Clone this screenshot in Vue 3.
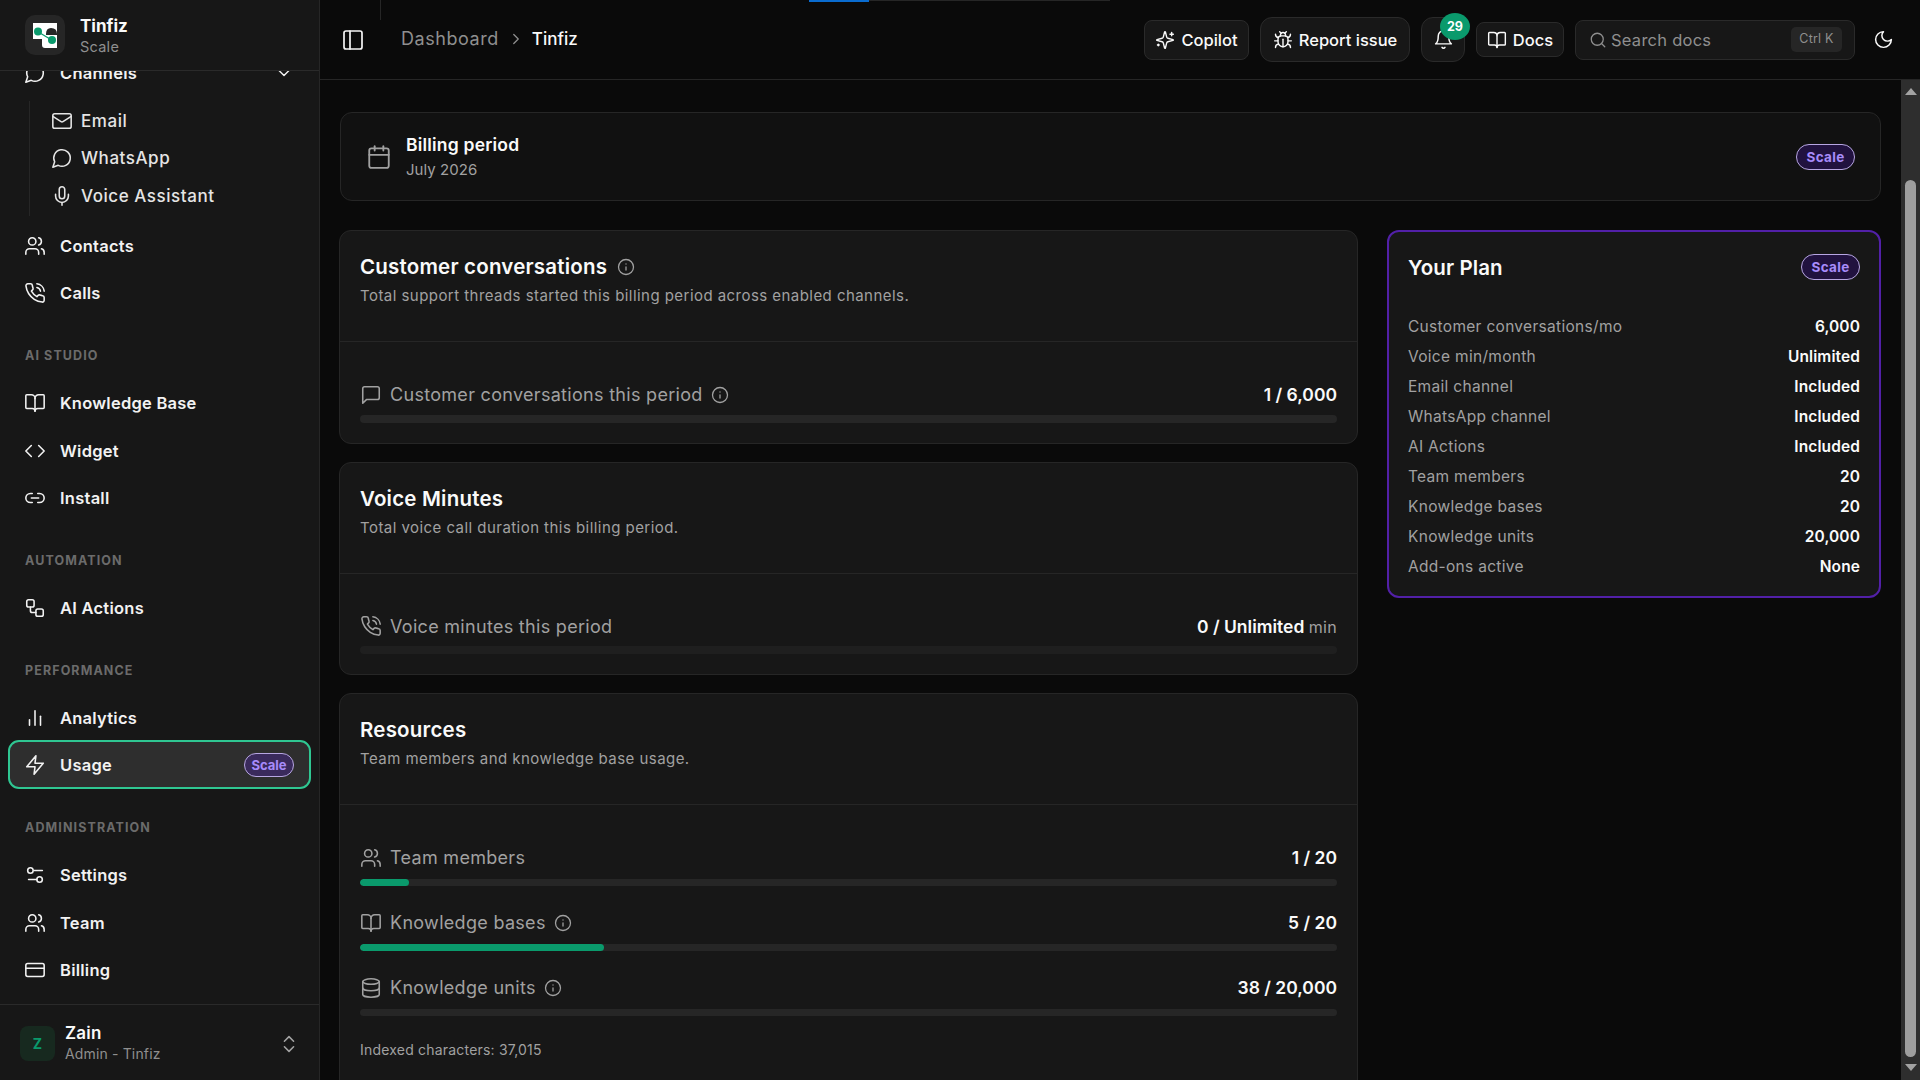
<script setup>
import { h } from 'vue'

const circle = (cx, cy, r) => `M${cx - r} ${cy}a${r} ${r} 0 1 0 ${2 * r} 0a${r} ${r} 0 1 0 ${-2 * r} 0`
const rect = (x, y, w, ht, r) =>
  `M${x + r} ${y}h${w - 2 * r}a${r} ${r} 0 0 1 ${r} ${r}v${ht - 2 * r}a${r} ${r} 0 0 1 ${-r} ${r}h${-(w - 2 * r)}a${r} ${r} 0 0 1 ${-r} ${-r}v${-(ht - 2 * r)}a${r} ${r} 0 0 1 ${r} ${-r}z`

const icons = {
  chat: ['M7.9 20A9 9 0 1 0 4 16.1L2 22Z'],
  mail: [rect(2, 4, 20, 16, 2), 'm22 7-8.97 5.7a1.94 1.94 0 0 1-2.06 0L2 7'],
  mic: ['M12 2a3 3 0 0 0-3 3v7a3 3 0 0 0 6 0V5a3 3 0 0 0-3-3Z', 'M19 10v2a7 7 0 0 1-14 0v-2', 'M12 19v3'],
  users: ['M16 21v-2a4 4 0 0 0-4-4H6a4 4 0 0 0-4 4v2', circle(9, 7, 4), 'M22 21v-2a4 4 0 0 0-3-3.87', 'M16 3.13a4 4 0 0 1 0 7.75'],
  calls: [
    'M22 16.92v3a2 2 0 0 1-2.18 2 19.79 19.79 0 0 1-8.63-3.07 19.5 19.5 0 0 1-6-6 19.79 19.79 0 0 1-3.07-8.67A2 2 0 0 1 4.11 2h3a2 2 0 0 1 2 1.72 12.84 12.84 0 0 0 .7 2.81 2 2 0 0 1-.45 2.11L8.09 9.91a16 16 0 0 0 6 6l1.27-1.27a2 2 0 0 1 2.11-.45 12.84 12.84 0 0 0 2.81.7A2 2 0 0 1 22 16.92z',
    'M14.05 2a9 9 0 0 1 8 7.94',
    'M14.05 6A5 5 0 0 1 18 10',
  ],
  book: ['M12 7v14', 'M3 18a1 1 0 0 1-1-1V4a1 1 0 0 1 1-1h5a4 4 0 0 1 4 4 4 4 0 0 1 4-4h5a1 1 0 0 1 1 1v13a1 1 0 0 1-1 1h-6a3 3 0 0 0-3 3 3 3 0 0 0-3-3z'],
  code: ['m16 18 6-6-6-6', 'm8 6-6 6 6 6'],
  link: ['M9 17H7A5 5 0 0 1 7 7h2', 'M15 7h2a5 5 0 1 1 0 10h-2', 'M8 12h8'],
  workflow: [rect(3, 3, 8, 8, 2), 'M7 11v4a2 2 0 0 0 2 2h4', rect(13, 13, 8, 8, 2)],
  chart: ['M18 20V10', 'M12 20V4', 'M6 20v-6'],
  zap: ['M13 2 3 14h9l-1 8 10-12h-9l1-8z'],
  sliders: ['M20 7h-9', 'M14 17H5', circle(17, 17, 3), circle(7, 7, 3)],
  card: [rect(2, 5, 20, 14, 2), 'M2 10h20'],
  updown: ['m7 15 5 5 5-5', 'm7 9 5-5 5 5'],
  down: ['m6 9 6 6 6-6'],
  panel: [rect(3, 3, 18, 18, 2), 'M9 3v18'],
  right: ['m9 18 6-6-6-6'],
  sparkles: [
    'M9.937 15.5A2 2 0 0 0 8.5 14.063l-6.135-1.582a.5.5 0 0 1 0-.962L8.5 9.936A2 2 0 0 0 9.937 8.5l1.582-6.135a.5.5 0 0 1 .963 0L14.063 8.5A2 2 0 0 0 15.5 9.937l6.135 1.581a.5.5 0 0 1 0 .964L15.5 14.063a2 2 0 0 0-1.437 1.437l-1.582 6.135a.5.5 0 0 1-.963 0z',
    'M20 3v4',
    'M22 5h-4',
    'M4 17v2',
    'M5 18H3',
  ],
  bug: [
    'm8 2 1.88 1.88',
    'M14.12 3.88 16 2',
    'M9 7.13v-1a3.003 3.003 0 1 1 6 0v1',
    'M12 20c-3.3 0-6-2.7-6-6v-3a4 4 0 0 1 4-4h4a4 4 0 0 1 4 4v3c0 3.3-2.7 6-6 6',
    'M12 20v-9',
    'M6.53 9C4.6 8.8 3 7.1 3 5',
    'M6 13H2',
    'M3 21c0-2.1 1.7-3.9 3.8-4',
    'M20.97 5c0 2.1-1.6 3.8-3.5 4',
    'M22 13h-4',
    'M17.2 17c2.1.1 3.8 1.9 3.8 4',
  ],
  bell: ['M6 8a6 6 0 0 1 12 0c0 7 3 9 3 9H3s3-2 3-9', 'M10.3 21a1.94 1.94 0 0 0 3.4 0'],
  search: [circle(11, 11, 8), 'm21 21-4.3-4.3'],
  moon: ['M12 3a6 6 0 0 0 9 9 9 9 0 1 1-9-9Z'],
  calendar: ['M8 2v4', 'M16 2v4', rect(3, 4, 18, 18, 2), 'M3 10h18'],
  info: [circle(12, 12, 10), 'M12 16v-4', 'M12 8h.01'],
  message: ['M21 15a2 2 0 0 1-2 2H7l-4 4V5a2 2 0 0 1 2-2h14a2 2 0 0 1 2 2z'],
  database: ['M3 5a9 3 0 1 0 18 0a9 3 0 1 0-18 0', 'M3 5V19A9 3 0 0 0 21 19V5', 'M3 12A9 3 0 0 0 21 12'],
}

const Icon = (props) =>
  h(
    'svg',
    {
      viewBox: '0 0 24 24',
      width: props.size || 22,
      height: props.size || 22,
      fill: 'none',
      stroke: 'currentColor',
      'stroke-width': props.sw || 1.7,
      'stroke-linecap': 'round',
      'stroke-linejoin': 'round',
    },
    icons[props.name].map((d) => h('path', { d })),
  )
Icon.props = ['name', 'size', 'sw']

const subItems = [
  { label: 'Email', icon: 'mail' },
  { label: 'WhatsApp', icon: 'chat' },
  { label: 'Voice Assistant', icon: 'mic' },
]

const topItems = [
  { label: 'Contacts', icon: 'users' },
  { label: 'Calls', icon: 'calls' },
]

const navGroups = [
  {
    title: 'AI Studio',
    items: [
      { label: 'Knowledge Base', icon: 'book' },
      { label: 'Widget', icon: 'code' },
      { label: 'Install', icon: 'link' },
    ],
  },
  { title: 'Automation', items: [{ label: 'AI Actions', icon: 'workflow' }] },
  {
    title: 'Performance',
    items: [
      { label: 'Analytics', icon: 'chart' },
      { label: 'Usage', icon: 'zap', active: true },
    ],
  },
  {
    title: 'Administration',
    items: [
      { label: 'Settings', icon: 'sliders' },
      { label: 'Team', icon: 'users' },
      { label: 'Billing', icon: 'card' },
    ],
  },
]

const resources = [
  { label: 'Team members', icon: 'users', value: '1 / 20', pct: 5 },
  { label: 'Knowledge bases', icon: 'book', value: '5 / 20', pct: 25, info: true },
  { label: 'Knowledge units', icon: 'database', value: '38 / 20,000', pct: 0, info: true },
]

const planRows = [
  ['Customer conversations/mo', '6,000'],
  ['Voice min/month', 'Unlimited'],
  ['Email channel', 'Included'],
  ['WhatsApp channel', 'Included'],
  ['AI Actions', 'Included'],
  ['Team members', '20'],
  ['Knowledge bases', '20'],
  ['Knowledge units', '20,000'],
  ['Add-ons active', 'None'],
]
</script>

<template>
  <div class="app">
    <aside class="sidebar">
      <div class="brand">
        <div class="logo">
          <svg viewBox="0 0 40 40" width="40" height="40">
            <path d="M8 8H32V33H20Q17 33 17 30V24H8Z" fill="#fff" />
            <path d="M21 19Q21 13 26 13Q32 13 32 19V20H21Z" fill="#262626" />
            <path d="M15 18L25 24" stroke="#0a9a6c" stroke-width="1.2" />
            <circle cx="13" cy="16.5" r="4" fill="#0a9a6c" />
            <circle cx="27" cy="25" r="4" fill="#0a9a6c" />
          </svg>
        </div>
        <div class="brand-text">
          <div class="brand-name">Tinfiz</div>
          <div class="brand-plan">Scale</div>
        </div>
      </div>

      <nav class="nav">
        <a class="nav-item channels">
          <Icon name="chat" />
          <span>Channels</span>
          <Icon class="channels-caret" name="down" :size="20" />
        </a>
        <div class="sub-list">
          <a v-for="item in subItems" :key="item.label" class="sub-item">
            <Icon :name="item.icon" />
            <span>{{ item.label }}</span>
          </a>
        </div>
        <a v-for="item in topItems" :key="item.label" class="nav-item">
          <Icon :name="item.icon" />
          <span>{{ item.label }}</span>
        </a>

        <section v-for="group in navGroups" :key="group.title" class="nav-group">
          <div class="group-title">{{ group.title }}</div>
          <a v-for="item in group.items" :key="item.label" class="nav-item" :class="{ active: item.active }">
            <Icon :name="item.icon" />
            <span>{{ item.label }}</span>
            <span v-if="item.active" class="plan-badge nav-badge">Scale</span>
          </a>
        </section>
      </nav>

      <div class="account">
        <div class="avatar">Z</div>
        <div class="account-text">
          <div class="account-name">Zain</div>
          <div class="account-role">Admin - Tinfiz</div>
        </div>
        <Icon class="account-caret" name="updown" :size="22" />
      </div>
    </aside>

    <div class="main">
      <header class="topbar">
        <span class="top-rule"></span>
        <span class="top-progress"><i></i></span>
        <Icon class="panel-toggle" name="panel" :size="24" />
        <div class="crumbs">
          <span class="crumb-muted">Dashboard</span>
          <Icon class="crumb-sep" name="right" :size="18" />
          <span class="crumb-current">Tinfiz</span>
        </div>
        <div class="top-actions">
          <button class="top-btn copilot"><Icon name="sparkles" :size="20" />Copilot</button>
          <button class="top-btn report"><Icon name="bug" :size="20" />Report issue</button>
          <button class="top-btn bell">
            <Icon name="bell" :size="21" />
            <span class="bell-count">29</span>
          </button>
          <button class="top-btn docs"><Icon name="book" :size="20" />Docs</button>
          <div class="search">
            <Icon name="search" :size="18" />
            <span>Search docs</span>
            <kbd>Ctrl K</kbd>
          </div>
          <span class="theme"><Icon name="moon" :size="21" /></span>
        </div>
      </header>

      <div class="body">
        <main class="content">
          <div class="period">
            <Icon class="period-icon" name="calendar" :size="26" />
            <div class="period-text">
              <div class="period-title">Billing period</div>
              <div class="period-month">July 2026</div>
            </div>
            <span class="plan-badge period-badge">Scale</span>
          </div>

          <div class="columns">
            <div class="stack">
              <section class="card">
                <div class="card-head">
                  <h2>Customer conversations <Icon class="info" name="info" :size="18" /></h2>
                  <p>Total support threads started this billing period across enabled channels.</p>
                </div>
                <div class="card-body">
                  <div class="meter">
                    <div class="meter-row">
                      <Icon name="message" />
                      <span class="meter-label">Customer conversations this period</span>
                      <Icon class="info" name="info" :size="18" />
                      <strong>1 / 6,000</strong>
                    </div>
                    <div class="track"></div>
                  </div>
                </div>
              </section>

              <section class="card">
                <div class="card-head">
                  <h2>Voice Minutes</h2>
                  <p>Total voice call duration this billing period.</p>
                </div>
                <div class="card-body">
                  <div class="meter">
                    <div class="meter-row">
                      <Icon name="calls" />
                      <span class="meter-label">Voice minutes this period</span>
                      <strong>0 / Unlimited <small>min</small></strong>
                    </div>
                    <div class="track faint"></div>
                  </div>
                </div>
              </section>

              <section class="card">
                <div class="card-head">
                  <h2>Resources</h2>
                  <p>Team members and knowledge base usage.</p>
                </div>
                <div class="card-body resources">
                  <div v-for="row in resources" :key="row.label" class="meter">
                    <div class="meter-row">
                      <Icon :name="row.icon" />
                      <span class="meter-label">{{ row.label }}</span>
                      <Icon v-if="row.info" class="info" name="info" :size="18" />
                      <strong>{{ row.value }}</strong>
                    </div>
                    <div class="track thin">
                      <div class="fill" :style="{ width: row.pct + '%' }"></div>
                    </div>
                  </div>
                  <div class="indexed">Indexed characters: 37,015</div>
                </div>
              </section>
            </div>

            <aside class="plan">
              <div class="plan-head">
                <h2>Your Plan</h2>
                <span class="plan-badge">Scale</span>
              </div>
              <div v-for="row in planRows" :key="row[0]" class="plan-row">
                <span>{{ row[0] }}</span>
                <strong>{{ row[1] }}</strong>
              </div>
            </aside>
          </div>
        </main>

        <div class="scrollbar">
          <span class="arrow up"></span>
          <span class="thumb"></span>
          <span class="arrow dn"></span>
        </div>
      </div>
    </div>
  </div>
</template>

<style scoped>
.app {
  display: flex;
  height: 1080px;
  overflow: hidden;
  background: #0a0a0a;
  color: #fafafa;
  font-family: Inter, 'Noto Sans', sans-serif;
  font-size: 16px;
}

.sidebar {
  display: flex;
  flex-direction: column;
  flex: none;
  width: 319px;
  height: 1080px;
  background: #171717;
  border-right: 1px solid #262626;
}

.brand {
  display: flex;
  flex: none;
  align-items: center;
  gap: 15px;
  height: 70px;
  padding-left: 25px;
  border-bottom: 1px solid #2a2a2a;
  position: relative;
  z-index: 1;
  background: #171717;
}

.brand-text {
  padding-top: 2px;
}

.logo {
  width: 40px;
  height: 40px;
  border-radius: 10px;
  background: #262626;
}

.logo svg {
  display: block;
}

.brand-name {
  font-size: 17px;
  font-weight: 700;
  line-height: 22px;
  letter-spacing: 0;
}

.brand-plan {
  font-size: 14.5px;
  line-height: 20px;
  color: #8f8f8f;
  letter-spacing: 0.25px;
}

.nav {
  flex: 1;
  min-height: 0;
  overflow: hidden;
}

.nav-item {
  display: flex;
  align-items: center;
  gap: 14px;
  height: 47.5px;
  padding-left: 24px;
  font-size: 16.5px;
  font-weight: 600;
  letter-spacing: 0.25px;
  color: #f2f2f2;
}

.nav-item svg {
  flex: none;
}

.channels {
  margin-top: -22px;
  padding-right: 25px;
}

.channels-caret {
  margin-left: auto;
}

.sub-list {
  display: flex;
  flex-direction: column;
  margin: 4px 0 6.5px 29px;
  padding: 1.5px 0 1px 21px;
  border-left: 1px solid #262626;
}

.sub-item {
  display: flex;
  align-items: center;
  gap: 8px;
  height: 37.5px;
  font-size: 17px;
  font-weight: 500;
  letter-spacing: 0.55px;
  color: #e5e5e5;
}

.nav-group {
  margin-top: 14.5px;
}

.group-title {
  display: flex;
  align-items: center;
  height: 48px;
  padding-left: 25px;
  font-size: 12.5px;
  font-weight: 700;
  letter-spacing: 1.1px;
  text-transform: uppercase;
  color: #6b6b6b;
}

.nav-item.active {
  box-sizing: border-box;
  height: 49px;
  margin: -2px 8px 0;
  padding: 0 15px 0 14px;
  border: 2px solid #2fc792;
  border-radius: 11px;
  background: #2e2e2e;
}

.plan-badge {
  display: inline-flex;
  flex: none;
  box-sizing: border-box;
  align-items: center;
  justify-content: center;
  width: 59px;
  height: 26px;
  border: 1px solid #b7a6e2;
  border-radius: 999px;
  background: #21123f;
  color: #a78bfa;
  font-size: 13.5px;
  font-weight: 700;
  letter-spacing: 0.3px;
}

.nav-badge {
  width: 50px;
  height: 24px;
  margin-left: auto;
  background: #3a2a5c;
  font-size: 13px;
  letter-spacing: 0;
}

.account {
  display: flex;
  flex: none;
  align-items: center;
  height: 76px;
  padding: 2px 20px 0;
  box-sizing: border-box;
  border-top: 1px solid #2a2a2a;
}

.avatar {
  display: flex;
  flex: none;
  align-items: center;
  justify-content: center;
  width: 35px;
  height: 35px;
  border-radius: 8px;
  background: #17291f;
  color: #0a9a6c;
  font-size: 14px;
  font-weight: 700;
}

.account-text {
  margin-left: 10px;
  margin-top: -2px;
}

.account-name {
  font-size: 17px;
  font-weight: 600;
  line-height: 22px;
  letter-spacing: 0.2px;
}

.account-role {
  font-size: 14px;
  line-height: 20px;
  color: #8f8f8f;
  letter-spacing: 0.15px;
}

.account-caret {
  margin-left: auto;
  margin-right: -1px;
  color: #a3a3a3;
}

.main {
  display: flex;
  flex: 1;
  flex-direction: column;
  min-width: 0;
}

.topbar {
  display: flex;
  flex: none;
  align-items: center;
  height: 79px;
  padding: 0 19px 0 21px;
  border-bottom: 1px solid #262626;
  position: relative;
}

.top-rule {
  position: absolute;
  left: 60px;
  top: 0;
  width: 1px;
  height: 20px;
  background: #262626;
}

.top-progress {
  position: absolute;
  left: 489px;
  top: 0;
  width: 301px;
  height: 1px;
  background: #262626;
}

.top-progress i {
  display: block;
  width: 60px;
  height: 1.5px;
  background: #0a6cd0;
}

.panel-toggle {
  flex: none;
  color: #f5f5f5;
}

.crumbs {
  display: flex;
  align-items: center;
  gap: 8px;
  margin-left: 36px;
  margin-top: -2px;
  font-size: 18px;
  font-weight: 500;
}

.crumb-muted {
  color: #8f8f8f;
  font-weight: 400;
  letter-spacing: 0.55px;
}

.crumb-sep {
  color: #8f8f8f;
}

.crumb-current {
  margin-left: -1px;
  font-size: 17px;
}

.top-actions {
  display: flex;
  align-items: center;
  margin-left: auto;
}

.top-btn {
  display: flex;
  flex: none;
  align-items: center;
  justify-content: center;
  gap: 6px;
  padding: 0;
  border: 1px solid #2a2a2a;
  background: #171717;
  color: #fafafa;
  font-family: inherit;
  font-size: 16.5px;
  font-weight: 500;
  letter-spacing: 0;
}

.copilot {
  width: 105px;
  height: 40px;
  border-radius: 8px;
}

.report {
  width: 150px;
  height: 45px;
  margin-left: 11px;
  border-radius: 12px;
}

.bell {
  width: 44px;
  height: 45px;
  margin-left: 11px;
  border-radius: 12px;
  position: relative;
}

.bell-count {
  position: absolute;
  top: -5px;
  right: -6px;
  display: flex;
  align-items: center;
  justify-content: center;
  width: 30px;
  height: 27px;
  border-radius: 50%;
  background: #0a9a6c;
  color: #fff;
  font-size: 12.5px;
  font-weight: 700;
}

.docs {
  width: 88px;
  height: 35px;
  margin-left: 11px;
  border-radius: 8px;
}

.search {
  display: flex;
  flex: none;
  align-items: center;
  width: 280px;
  height: 40px;
  margin-left: 11px;
  padding: 0 12px 0 13px;
  border: 1px solid #2a2a2a;
  border-radius: 8px;
  background: #171717;
  box-sizing: border-box;
  color: #8f8f8f;
  font-size: 16.5px;
  letter-spacing: 0.25px;
}

.search svg {
  margin-right: 4px;
}

.search kbd {
  margin-left: auto;
  width: 51px;
  height: 25px;
  border-radius: 5px;
  background: #262626;
  font-family: inherit;
  font-size: 12.5px;
  line-height: 24px;
  letter-spacing: 0.2px;
  text-align: center;
  color: #8f8f8f;
}

.theme {
  display: flex;
  align-items: center;
  justify-content: center;
  width: 36px;
  margin-left: 10px;
}

.body {
  display: flex;
  flex: 1;
  min-height: 0;
}

.content {
  flex: 1;
  min-width: 0;
  overflow: hidden;
  padding: 32px 20px 0;
}

.period {
  display: flex;
  align-items: center;
  height: 89px;
  box-sizing: border-box;
  padding: 0 25px 0 25px;
  border: 1px solid #262626;
  border-radius: 12px;
  background: #111;
}

.period-icon {
  flex: none;
  margin-right: 14px;
  color: #a1a1a1;
}

.period-text {
  margin-top: -1px;
}

.period-title {
  font-size: 17.5px;
  font-weight: 600;
  line-height: 26px;
  letter-spacing: 0.2px;
}

.period-month {
  margin-top: 2px;
  font-size: 15px;
  line-height: 20px;
  letter-spacing: 0.05px;
  color: #a1a1a1;
}

.period-badge {
  margin-left: auto;
}

.columns {
  display: grid;
  grid-template-columns: 1fr 494px;
  gap: 29px;
  margin-top: 29px;
  margin-left: -1px;
  align-items: start;
}

.stack {
  display: flex;
  flex-direction: column;
  gap: 18px;
}

.card {
  box-sizing: border-box;
  border: 1px solid #262626;
  border-radius: 12px;
  background: #171717;
}

.card-head {
  box-sizing: border-box;
  height: 111px;
  padding: 19px 20px 0;
  border-bottom: 1px solid #262626;
}

.card-head h2 {
  display: flex;
  align-items: center;
  gap: 10px;
  margin: 0;
  font-size: 20.5px;
  font-weight: 600;
  line-height: 34px;
  letter-spacing: 0.2px;
}

.card-head p {
  margin: 1px 0 0;
  font-size: 15px;
  line-height: 22px;
  letter-spacing: 0.45px;
  color: #a1a1a1;
}

.info {
  flex: none;
  color: #a1a1a1;
}

.card-body {
  padding: 38.5px 20px 20px;
}

.resources {
  padding-bottom: 40px;
}

.meter-row {
  display: flex;
  align-items: center;
  gap: 8px;
  height: 28px;
  color: #a1a1a1;
}

.meter-row svg {
  flex: none;
}

.meter-label {
  font-size: 18px;
  letter-spacing: 0.3px;
}

.meter-row strong {
  margin-left: auto;
  font-size: 17.5px;
  font-weight: 600;
  letter-spacing: 0;
  color: #fafafa;
}

.meter-row small {
  font-size: 16px;
  font-weight: 400;
  letter-spacing: 0.3px;
  color: #a1a1a1;
}

.track {
  height: 8px;
  margin-top: 6px;
  border-radius: 4px;
  background: #262626;
  overflow: hidden;
}

.track.faint {
  background: #1f1f1f;
}

.track.thin {
  height: 7px;
  margin-top: 7px;
}

.resources .meter + .meter {
  margin-top: 23px;
}

.fill {
  height: 100%;
  border-radius: 4px;
  background: #0a9a6c;
}

.indexed {
  margin-top: 23px;
  font-size: 14px;
  line-height: 22px;
  letter-spacing: 0.2px;
  color: #a1a1a1;
}

.plan {
  box-sizing: border-box;
  height: 368px;
  padding: 0 19px 0 19px;
  border: 2px solid #5220a8;
  border-radius: 12px;
  background: #171717;
}

.plan-head {
  display: flex;
  align-items: center;
  justify-content: space-between;
  height: 70px;
  margin-bottom: 9px;
}

.plan-head h2 {
  margin: 0;
  font-size: 20.5px;
  font-weight: 600;
  letter-spacing: 0.1px;
}

.plan-row {
  display: flex;
  align-items: center;
  justify-content: space-between;
  height: 30px;
  font-size: 15.5px;
  letter-spacing: 0.3px;
  color: #a1a1a1;
}

.plan-row strong {
  font-weight: 600;
  letter-spacing: 0.1px;
  color: #fafafa;
}

.scrollbar {
  display: flex;
  flex: none;
  flex-direction: column;
  align-items: center;
  width: 19px;
  background: #2e2e2e;
}

.arrow {
  flex: none;
  width: 0;
  height: 0;
  border-left: 6.5px solid transparent;
  border-right: 6.5px solid transparent;
}

.arrow.up {
  margin-top: 8px;
  border-bottom: 7px solid #a3a3a3;
}

.thumb {
  width: 11px;
  height: 877px;
  margin-top: 85px;
  border-radius: 6px;
  background: #9e9e9e;
}

.arrow.dn {
  margin-top: 7px;
  border-top: 7px solid #a3a3a3;
}
</style>

<style>
html,
body {
  background: #0a0a0a;
  overflow: hidden;
}
</style>
